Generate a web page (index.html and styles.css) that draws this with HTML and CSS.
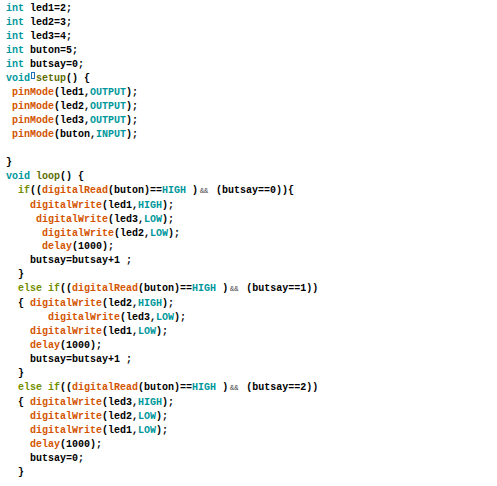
FILE: index.html
```html
<!DOCTYPE html>
<html>
<head>
<meta charset="utf-8">
<link rel="stylesheet" href="styles.css">
</head>
<body>
<div class="code"><span class="kw">int</span> led1=2;
<span class="kw">int</span> led2=3;
<span class="kw">int</span> led3=4;
<span class="kw">int</span> buton=5;
<span class="kw">int</span> butsay=0;
<span class="kw">void</span><span class="caret"><span class="box"></span></span><span class="st">setup</span>() {
 <span class="fn">pinMode</span>(led1,<span class="kw">OUTPUT</span>);
 <span class="fn">pinMode</span>(led2,<span class="kw">OUTPUT</span>);
 <span class="fn">pinMode</span>(led3,<span class="kw">OUTPUT</span>);
 <span class="fn">pinMode</span>(buton,<span class="kw">INPUT</span>);

}
<span class="kw">void</span> <span class="st">loop</span>() {
  <span class="ctl">if</span>((<span class="fn">digitalRead</span>(buton)==<span class="kw">HIGH</span> )<span class="amp">&amp;&amp;</span> (butsay==0)){
    <span class="fn">digitalWrite</span>(led1,<span class="kw">HIGH</span>);
     <span class="fn">digitalWrite</span>(led3,<span class="kw">LOW</span>);
      <span class="fn">digitalWrite</span>(led2,<span class="kw">LOW</span>);
      <span class="fn">delay</span>(1000);
    butsay=butsay+1 ;
  }
  <span class="ctl">else</span> <span class="ctl">if</span>((<span class="fn">digitalRead</span>(buton)==<span class="kw">HIGH</span> )<span class="amp">&amp;&amp;</span> (butsay==1))
  { <span class="fn">digitalWrite</span>(led2,<span class="kw">HIGH</span>);
       <span class="fn">digitalWrite</span>(led3,<span class="kw">LOW</span>);
    <span class="fn">digitalWrite</span>(led1,<span class="kw">LOW</span>);
    <span class="fn">delay</span>(1000);
    butsay=butsay+1 ;
  }
  <span class="ctl">else</span> <span class="ctl">if</span>((<span class="fn">digitalRead</span>(buton)==<span class="kw">HIGH</span> )<span class="amp">&amp;&amp;</span> (butsay==2))
  { <span class="fn">digitalWrite</span>(led3,<span class="kw">HIGH</span>);
    <span class="fn">digitalWrite</span>(led2,<span class="kw">LOW</span>);
    <span class="fn">digitalWrite</span>(led1,<span class="kw">LOW</span>);
    <span class="fn">delay</span>(1000);
    butsay=0;
  }</div>
</body>
</html>
```
FILE: styles.css
```css
html, body {
  margin: 0;
  padding: 0;
  background: #ffffff;
}
.code {
  white-space: pre;
  font-family: "Liberation Mono", "Courier New", monospace;
  font-weight: bold;
  font-size: 10px;
  line-height: 13.97px;
  color: #000000;
  padding: 2px 0 0 6px;
}
.kw { color: #00979c; }
.st { color: #5e6d03; }
.ctl { color: #728e00; }
.fn { color: #d35400; }
.amp {
  display: inline-block;
  width: 12px;
  font-size: 7px;
  font-weight: normal;
  color: #444444;
  text-align: center;
}
.caret {
  display: inline-block;
  width: 6px;
  height: 10px;
  vertical-align: top;
  position: relative;
}
.box {
  position: absolute;
  left: 1px;
  top: 0;
  width: 2px;
  height: 5px;
  border: 1px solid #1f6fb5;
}
```
